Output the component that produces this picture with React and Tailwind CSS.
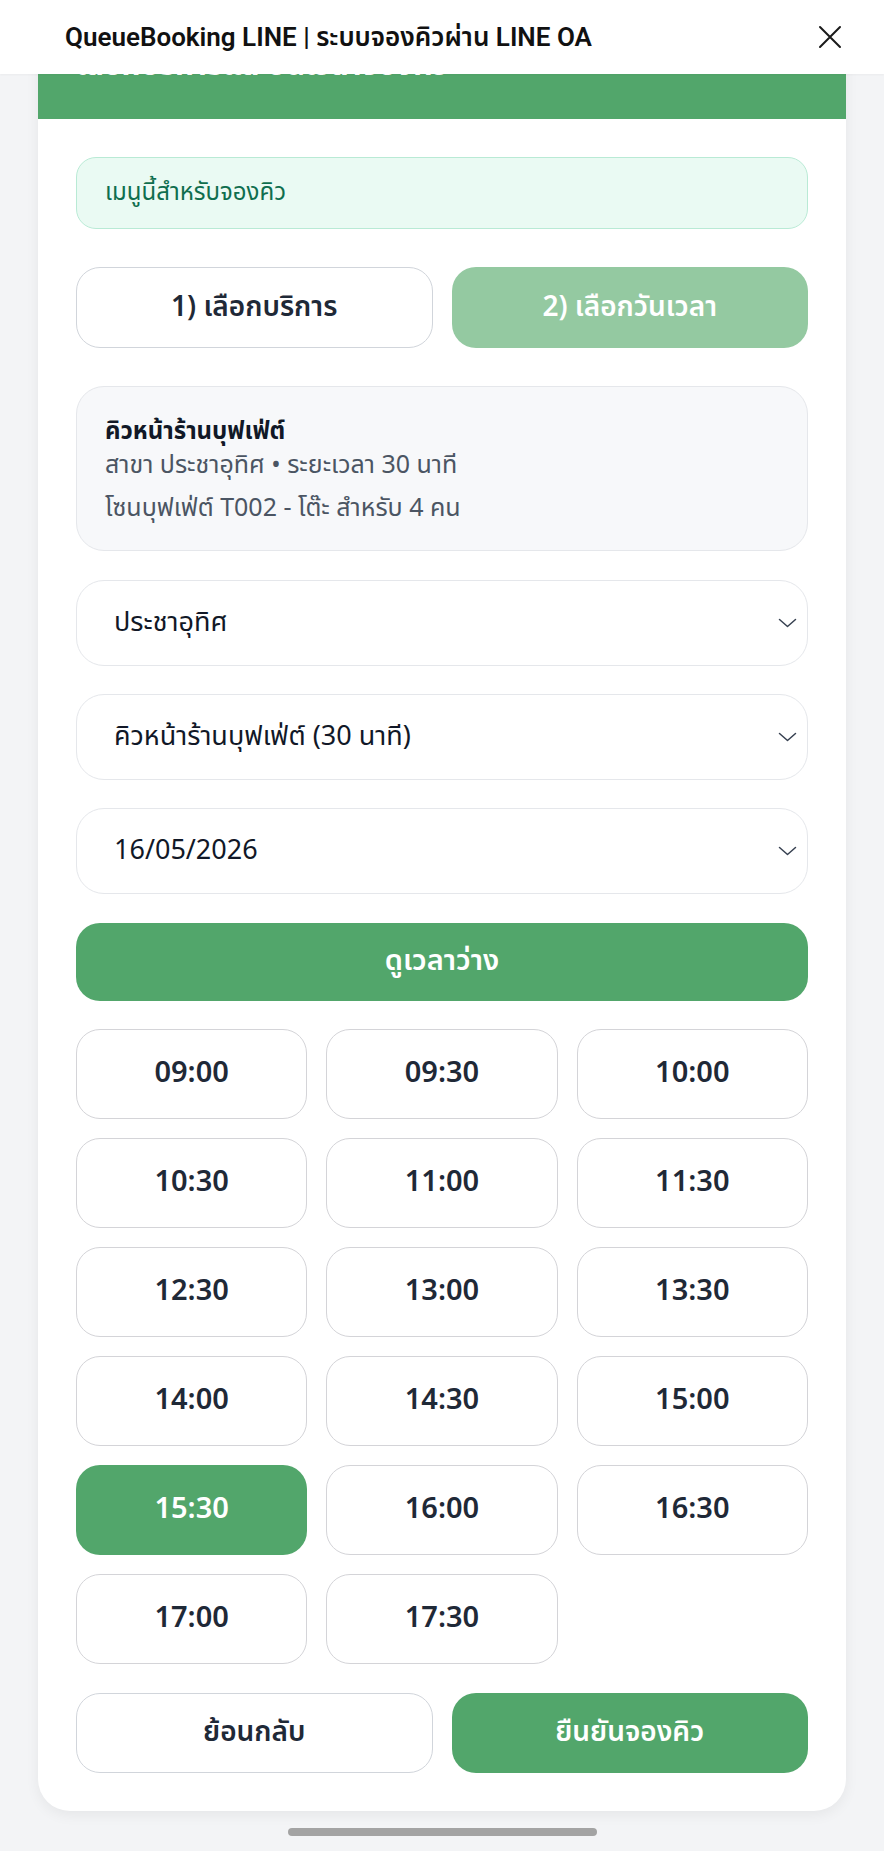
import React from "react";

const times = [
  "09:00", "09:30", "10:00",
  "10:30", "11:00", "11:30",
  "12:30", "13:00", "13:30",
  "14:00", "14:30", "15:00",
  "15:30", "16:00", "16:30",
  "17:00", "17:30",
];

const Chevron = () => (
  <svg width="19" height="10" viewBox="0 0 19 10" fill="none">
    <path d="M1.5 1.5 L9.5 8.5 L17.5 1.5" stroke="#374151" strokeWidth="1.5" strokeLinecap="round" strokeLinejoin="round" />
  </svg>
);

const SelectBox = ({ value }) => (
  <div className="h-[86px] rounded-[28px] border border-[#e5e7eb] bg-white flex items-center justify-between pl-[37px] pr-[10px]">
    <span className="text-[27px] text-[#111827]">{value}</span>
    <Chevron />
  </div>
);

const App = () => {
  const selected = "15:30";

  return (
    <div className="min-h-[1851px] bg-[#f3f4f6] font-['Noto_Sans_Thai','Noto_Sans','Liberation_Sans',sans-serif]">
      <header className="relative z-10 h-[74px] bg-white flex items-center justify-between pl-[65px] pr-[42px] shadow-[0_1px_2px_rgba(0,0,0,0.04)]">
        <h1 className="text-[26px] font-semibold text-[#111111] font-['Roboto','Noto_Sans_Thai',sans-serif]">
          QueueBooking LINE | ระบบจองคิวผ่าน LINE OA
        </h1>
        <svg width="24" height="24" viewBox="0 0 24 24" fill="none">
          <path d="M2 2 L22 22 M22 2 L2 22" stroke="#1a1a1a" strokeWidth="2" strokeLinecap="round" />
        </svg>
      </header>

      <div className="mx-[38px] -mt-[60px] bg-white rounded-b-[32px] overflow-hidden shadow-[0_4px_14px_rgba(0,0,0,0.06)]">
        <div className="bg-[#52a66b] px-[38px] pt-[34px] pb-[35px]">
          <h2 className="text-[30px] leading-[36px] font-bold text-white">เลือกบริการและวันเวลาจองคิว</h2>
        </div>

        <div className="px-[38px] pt-[38px] pb-[38px] flex flex-col">
          <div className="h-[72px] rounded-[20px] border border-[#b9ead5] bg-[#eafaf3] flex items-center px-[28px]">
            <span className="text-[24px] text-[#0f6e4e]">เมนูนี้สำหรับจองคิว</span>
          </div>

          <div className="mt-[38px] grid grid-cols-2 gap-[19px]">
            <button className="h-[81px] rounded-[24px] border border-[#d1d5db] bg-white text-[28px] font-semibold text-[#1f2937]">
              1) เลือกบริการ
            </button>
            <button className="h-[81px] rounded-[24px] bg-[#94c9a1] text-[28px] font-semibold text-white">
              2) เลือกวันเวลา
            </button>
          </div>

          <div className="mt-[38px] h-[165px] rounded-[28px] border border-[#e5e7eb] bg-[#f7f8fa] px-[28px] pt-[28px]">
            <p className="text-[24px] leading-[34px] font-bold text-[#111827]">คิวหน้าร้านบุฟเฟ่ต์</p>
            <p className="text-[25px] leading-[32px] text-[#4b5563]">สาขา ประชาอุทิศ • ระยะเวลา 30 นาที</p>
            <p className="mt-[11px] text-[25px] leading-[32px] text-[#4b5563]">โซนบุฟเฟ่ต์ T002 - โต๊ะ สำหรับ 4 คน</p>
          </div>

          <div className="mt-[29px] flex flex-col gap-[28px]">
            <SelectBox value="ประชาอุทิศ" />
            <SelectBox value="คิวหน้าร้านบุฟเฟ่ต์ (30 นาที)" />
            <SelectBox value="16/05/2026" />
          </div>

          <button className="mt-[29px] h-[78px] rounded-[24px] bg-[#52a66b] text-[29px] font-semibold text-white">
            ดูเวลาว่าง
          </button>

          <div className="mt-[28px] grid grid-cols-3 gap-x-[19px] gap-y-[19px]">
            {times.map((t) => (
              <button
                key={t}
                className={
                  t === selected
                    ? "h-[90px] rounded-[24px] bg-[#52a66b] text-[29px] font-semibold text-white"
                    : "h-[90px] rounded-[24px] border border-[#d4d4d8] bg-white text-[29px] font-semibold text-[#1f2937]"
                }
              >
                {t}
              </button>
            ))}
          </div>

          <div className="mt-[29px] grid grid-cols-2 gap-[19px]">
            <button className="h-[80px] rounded-[24px] border border-[#d1d5db] bg-white text-[28px] font-semibold text-[#1f2937]">
              ย้อนกลับ
            </button>
            <button className="h-[80px] rounded-[24px] bg-[#52a66b] text-[28px] font-semibold text-white">
              ยืนยันจองคิว
            </button>
          </div>
        </div>
      </div>

      <div className="mt-[17px] flex justify-center">
        <div className="h-[8px] w-[309px] rounded-full bg-[#a3a3a3]" />
      </div>
    </div>
  );
};

export default App;
